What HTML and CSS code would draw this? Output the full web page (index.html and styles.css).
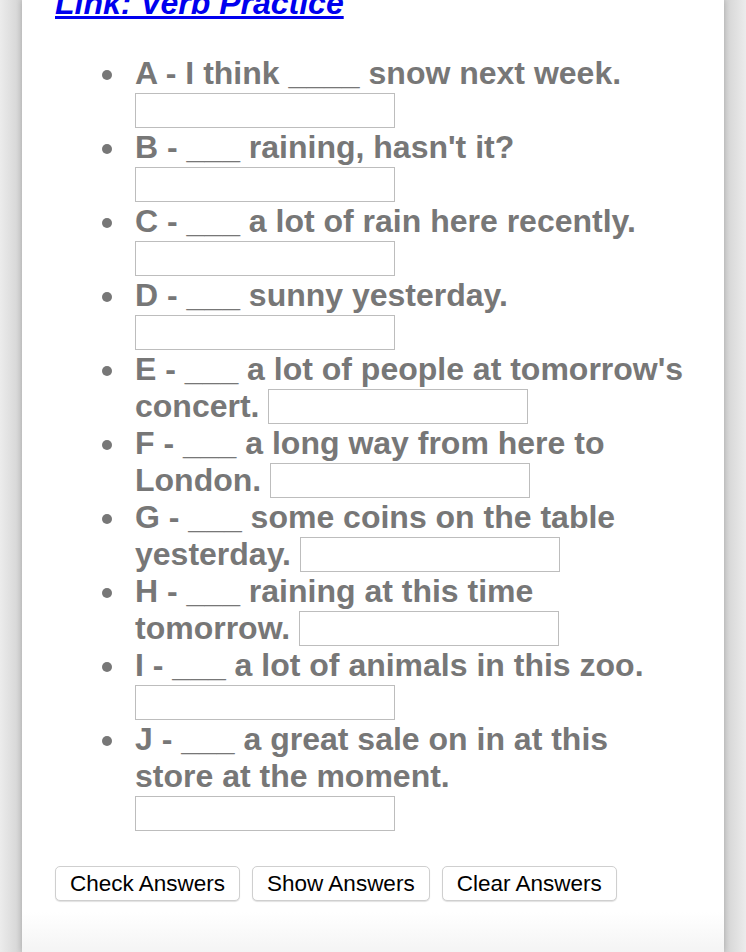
FILE: index.html
```html
<!DOCTYPE html>
<html lang="en">
<head>
  <meta charset="UTF-8" />
  <meta name="viewport" content="width=device-width, initial-scale=1.0" />
  <title>Verb Practice</title>
  <link rel="stylesheet" href="styles.css">
</head>
<body>
  <div class="page">
    <div class="link-line"><a href="#">Link: Verb Practice</a></div>

    <ul class="quiz">
      <li>A - I think ____ snow next week. <input type="text" /></li>
      <li>B - ___ raining, hasn't it? <input type="text" /></li>
      <li>C - ___ a lot of rain here recently. <input type="text" /></li>
      <li>D - ___ sunny yesterday. <input type="text" /></li>
      <li>E - ___ a lot of people at tomorrow's concert. <input type="text" /></li>
      <li>F - ___ a long way from here to London. <input type="text" /></li>
      <li>G - ___ some coins on the table yesterday. <input type="text" /></li>
      <li>H - ___ raining at this time tomorrow. <input type="text" /></li>
      <li>I - ___ a lot of animals in this zoo. <input type="text" /></li>
      <li>J - ___ a great sale on in at this store at the moment. <input type="text" /></li>
    </ul>

    <div class="buttons">
      <button>Check Answers</button>
      <button>Show Answers</button>
      <button>Clear Answers</button>
    </div>
  </div>
</body>
</html>
```

FILE: styles.css
```css
html, body { height: 100%; }
body {
  margin: 0;
  background: linear-gradient(to right, #ececec 0, #d2d2d2 22px, #d2d2d2 724px, #ececec 746px);
  font-family: "Liberation Sans", Arial, sans-serif;
  overflow: hidden;
}
.page {
  display: flow-root;
  box-sizing: border-box;
  margin: 0 22px;
  min-height: 100%;
  padding: 0 33px;
  background: linear-gradient(to bottom, #fff 0, #fff 912px, #f4f4f4 952px);
  box-shadow: 0 0 6px rgba(0, 0, 0, 0.2);
}

/* リンク行は上が切れている */
.link-line {
  margin-top: -13px;
  font-size: 32px;
  line-height: 32px;
  font-weight: bold;
  font-style: italic;
}
.link-line a { color: #0000ee; }

.quiz {
  margin: 36px 0 0;
  padding-left: 80px;
  list-style: none;
  color: #777;
  font-size: 32px;
  line-height: 37px;
  font-weight: bold;
}
/* 黒丸 */
.quiz li::before {
  content: "";
  display: inline-block;
  width: 10px;
  height: 10px;
  margin-left: -33px;
  margin-right: 23px;
  border-radius: 50%;
  background: #777;
  vertical-align: 4px;
}
.quiz input {
  box-sizing: border-box;
  width: 260px;
  height: 35px;
  margin: 1px 0 0;
  vertical-align: top;
  border: 1px solid #bdbdbd;
  background: #fff;
}

.buttons { margin-top: 34px; display: flex; gap: 12px; }
.buttons button {
  height: 35px;
  padding: 0 14px;
  font-family: "Liberation Sans", Arial, sans-serif;
  font-size: 22.5px;
  color: #000;
  background: #fff;
  border: 1px solid #cfcfcf;
  border-radius: 5px;
  box-shadow: 0 1px 1px rgba(0, 0, 0, 0.12);
}
```
